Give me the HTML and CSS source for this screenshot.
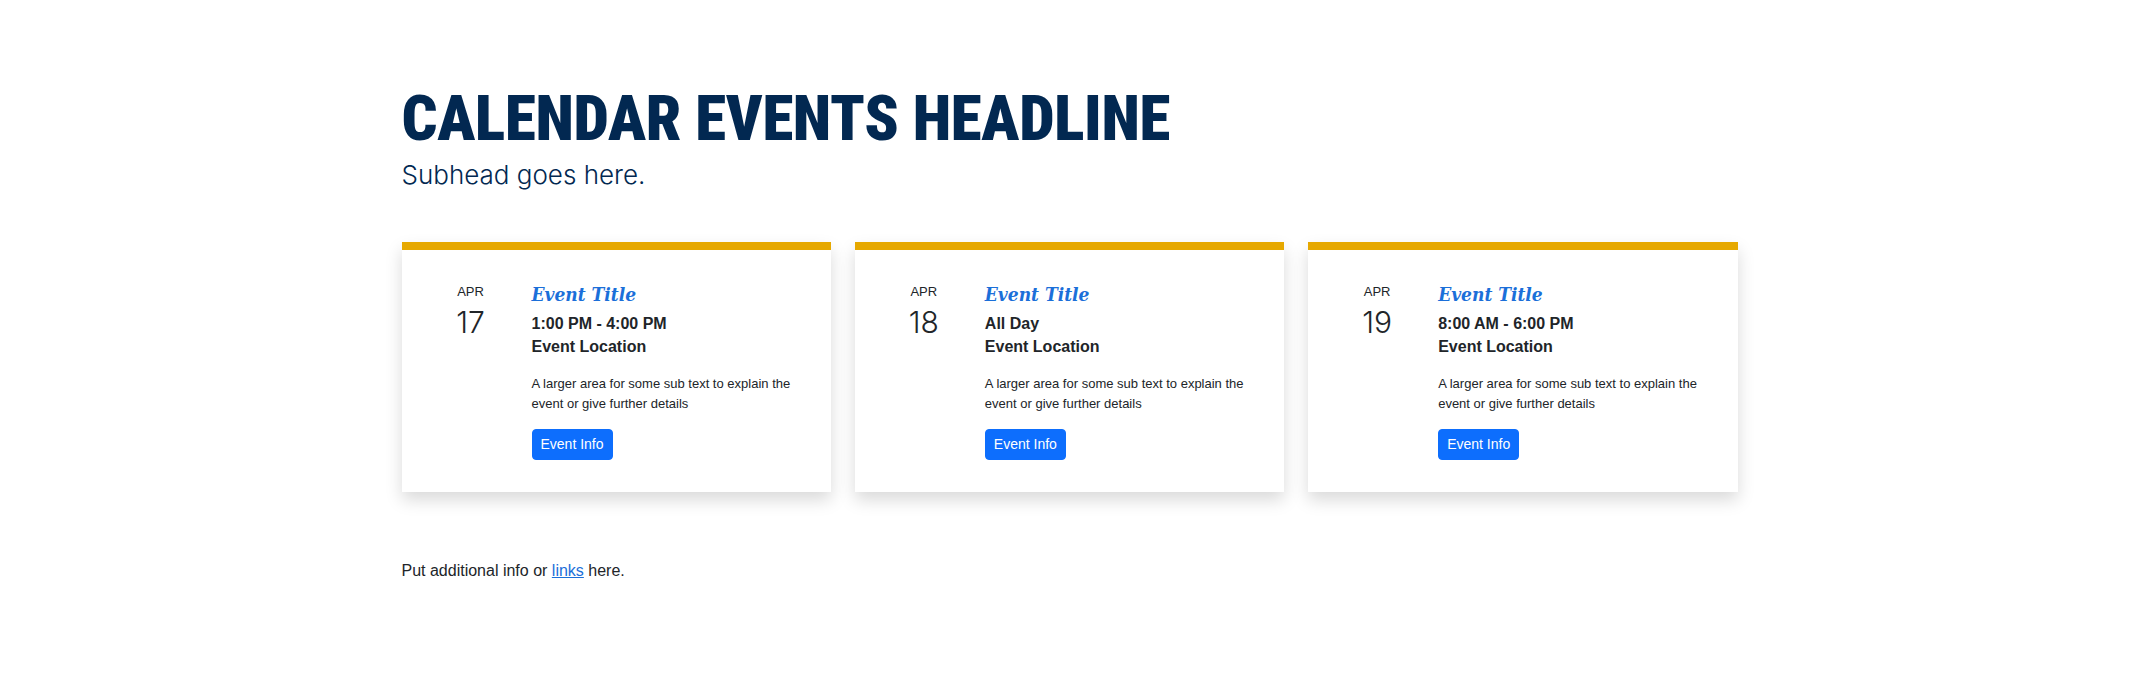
FILE: index.html
```html
<!DOCTYPE html>
<html lang="en">
<head>
<meta charset="utf-8">
<title>Calendar Events</title>
<link rel="stylesheet" href="styles.css">
</head>
<body>
<main class="page">
  <header class="intro">
    <h1 class="headline">CALENDAR EVENTS HEADLINE</h1>
    <p class="subhead">Subhead goes here.</p>
  </header>

  <section class="cards">
    <article class="card">
      <div class="card-body">
        <div class="date">
          <span class="month">APR</span>
          <span class="day">17</span>
        </div>
        <div class="info">
          <h2 class="title">Event Title</h2>
          <p class="meta">1:00 PM - 4:00 PM</p>
          <p class="meta location">Event Location</p>
          <p class="desc">A larger area for some sub text to explain the event or give further details</p>
          <a class="btn" href="#">Event Info</a>
        </div>
      </div>
    </article>
    <article class="card">
      <div class="card-body">
        <div class="date">
          <span class="month">APR</span>
          <span class="day">18</span>
        </div>
        <div class="info">
          <h2 class="title">Event Title</h2>
          <p class="meta">All Day</p>
          <p class="meta location">Event Location</p>
          <p class="desc">A larger area for some sub text to explain the event or give further details</p>
          <a class="btn" href="#">Event Info</a>
        </div>
      </div>
    </article>
    <article class="card">
      <div class="card-body">
        <div class="date">
          <span class="month">APR</span>
          <span class="day">19</span>
        </div>
        <div class="info">
          <h2 class="title">Event Title</h2>
          <p class="meta">8:00 AM - 6:00 PM</p>
          <p class="meta location">Event Location</p>
          <p class="desc">A larger area for some sub text to explain the event or give further details</p>
          <a class="btn" href="#">Event Info</a>
        </div>
      </div>
    </article>
  </section>

  <p class="footnote">Put additional info or <a href="#">links</a> here.</p>
</main>
</body>
</html>
```

FILE: styles.css
```css
* { box-sizing: border-box; }

html, body {
  margin: 0;
  padding: 0;
  background: #ffffff;
}

body {
  font-family: "Liberation Sans", Arial, sans-serif;
  color: #212529;
}

.page {
  max-width: 1336px;
  margin: 0 auto;
  padding-top: 83px;
}

.headline {
  margin: 0;
  font-family: Roboto, "Liberation Sans", sans-serif;
  font-weight: 900;
  font-stretch: condensed;
  font-size: 63px;
  line-height: 72px;
  letter-spacing: -0.3px;
  color: #022851;
}

.subhead {
  margin: 4px 0 0;
  font-family: Inter, "Liberation Sans", sans-serif;
  font-weight: 300;
  font-size: 26px;
  line-height: 32px;
  color: #022851;
}

.cards {
  display: grid;
  grid-template-columns: repeat(3, 1fr);
  column-gap: 24px;
  margin-top: 51px;
}

.card {
  background: #fff;
  border-top: 8px solid #e6a800;
  box-shadow: 0 8px 16px rgba(0, 0, 0, 0.15);
}

.card-body {
  display: flex;
  gap: 24px;
  padding: 32px;
}

.date {
  width: 74px;
  flex: none;
  display: flex;
  flex-direction: column;
  align-items: center;
}

.month {
  font-size: 13px;
  line-height: 19.5px;
  color: #212529;
}

.day {
  font-family: Inter, "Liberation Sans", sans-serif;
  font-weight: 300;
  font-size: 30px;
  line-height: 36px;
  color: #212529;
  margin-top: 2px;
}

.info {
  flex: 1;
  min-width: 0;
}

.title {
  margin: 0 0 6px;
  font-family: "DejaVu Serif Condensed", "DejaVu Serif", serif;
  font-stretch: condensed;
  font-style: italic;
  font-weight: 700;
  font-size: 19px;
  line-height: 24px;
  color: #1b6fd9;
}

.meta {
  margin: 0;
  font-weight: 700;
  font-size: 16px;
  line-height: 23px;
  color: #212529;
}

.location {
  margin-bottom: 16px;
}

.desc {
  margin: 0 0 16px;
  font-size: 13px;
  line-height: 19.5px;
  color: #212529;
}

.btn {
  display: inline-block;
  padding: 4px 8px;
  border: 1px solid #0d6efd;
  border-radius: 4px;
  background: #0d6efd;
  color: #fff;
  font-size: 14px;
  line-height: 21px;
  text-decoration: none;
}

.footnote {
  margin: 67px 0 0;
  font-size: 16px;
  line-height: 24px;
  color: #212529;
}

.footnote a {
  color: #1b6fd9;
}
```
